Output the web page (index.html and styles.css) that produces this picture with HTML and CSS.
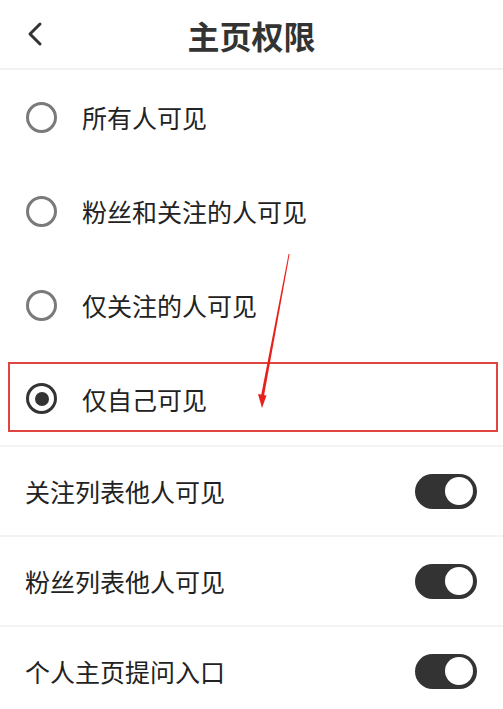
FILE: index.html
```html
<!DOCTYPE html>
<html lang="zh-CN">
<head>
<meta charset="utf-8">
<title>主页权限</title>
<link rel="stylesheet" href="styles.css">
</head>
<body>
<div class="page">
  <header class="topbar">
    <span class="back">
      <svg width="18" height="26" viewBox="0 0 18 26"><path d="M14 3 L4 13 L14 23" fill="none" stroke="#333" stroke-width="3" stroke-linecap="round" stroke-linejoin="round"/></svg>
    </span>
    <h1 class="title">主页权限</h1>
  </header>

  <ul class="radio-list">
    <li class="radio-row"><span class="radio"></span><span class="label">所有人可见</span></li>
    <li class="radio-row"><span class="radio"></span><span class="label">粉丝和关注的人可见</span></li>
    <li class="radio-row"><span class="radio"></span><span class="label">仅关注的人可见</span></li>
    <li class="radio-row selected"><span class="radio checked"></span><span class="label">仅自己可见</span><span class="highlight"></span></li>
  </ul>

  <ul class="toggle-list">
    <li class="toggle-row"><span class="label">关注列表他人可见</span><span class="switch"><span class="knob"></span></span></li>
    <li class="toggle-row"><span class="label">粉丝列表他人可见</span><span class="switch"><span class="knob"></span></span></li>
    <li class="toggle-row"><span class="label">个人主页提问入口</span><span class="switch"><span class="knob"></span></span></li>
  </ul>

  <svg class="arrow" width="503" height="709" viewBox="0 0 503 709">
    <polygon points="288.6,254 289.6,254 263.6,398 260.6,398" fill="#e8201c"/>
    <polygon points="258,394 266.5,395.5 262,408" fill="#e8201c"/>
  </svg>
</div>
</body>
</html>
```

FILE: styles.css
```css
html, body {
  margin: 0;
  padding: 0;
  background: #ffffff;
}

body {
  font-family: "Noto Sans CJK SC", "Noto Sans", sans-serif;
  color: #222222;
}

.page {
  position: relative;
  width: 503px;
  height: 709px;
  overflow: hidden;
}

.topbar {
  height: 68px;
  display: flex;
  align-items: center;
  justify-content: center;
  position: relative;
  border-bottom: 2px solid #f1f1f1;
}

.back {
  position: absolute;
  left: 26px;
  top: 21px;
  display: flex;
}

.title {
  margin: 0;
  font-size: 32px;
  font-weight: 700;
  color: #333333;
  line-height: 1;
  padding-top: 2px;
}

.radio-list,
.toggle-list {
  list-style: none;
  margin: 0;
  padding: 0;
}

.radio-row {
  height: 94px;
  display: flex;
  align-items: center;
  padding-left: 26px;
  gap: 25px;
  position: relative;
}

.radio-row:last-child {
  height: 93px;
}

.radio {
  width: 31px;
  height: 31px;
  box-sizing: border-box;
  border: 3px solid #7a7a7a;
  border-radius: 50%;
  display: flex;
  align-items: center;
  justify-content: center;
  flex: none;
}

.radio.checked {
  border-color: #333333;
}

.radio.checked::after {
  content: "";
  width: 14px;
  height: 14px;
  border-radius: 50%;
  background: #333333;
}

.label {
  font-size: 25px;
  line-height: 1;
  color: #222222;
}

.selected .label {
  padding-top: 2px;
}

.highlight {
  position: absolute;
  left: 8px;
  right: 5px;
  top: 10px;
  height: 70px;
  box-sizing: border-box;
  border: 2px solid #e0443f;
  pointer-events: none;
}

.toggle-row {
  height: 88px;
  border-top: 2px solid #f3f3f3;
  display: flex;
  align-items: center;
  justify-content: space-between;
  padding: 0 26px 0 25px;
}

.switch {
  width: 62px;
  height: 35px;
  border-radius: 18px;
  background: #333333;
  display: flex;
  align-items: center;
  justify-content: flex-end;
  padding-right: 4px;
  box-sizing: border-box;
}

.knob {
  width: 28px;
  height: 28px;
  border-radius: 50%;
  background: #ffffff;
}

.arrow {
  position: absolute;
  left: 0;
  top: 0;
  pointer-events: none;
}
```
